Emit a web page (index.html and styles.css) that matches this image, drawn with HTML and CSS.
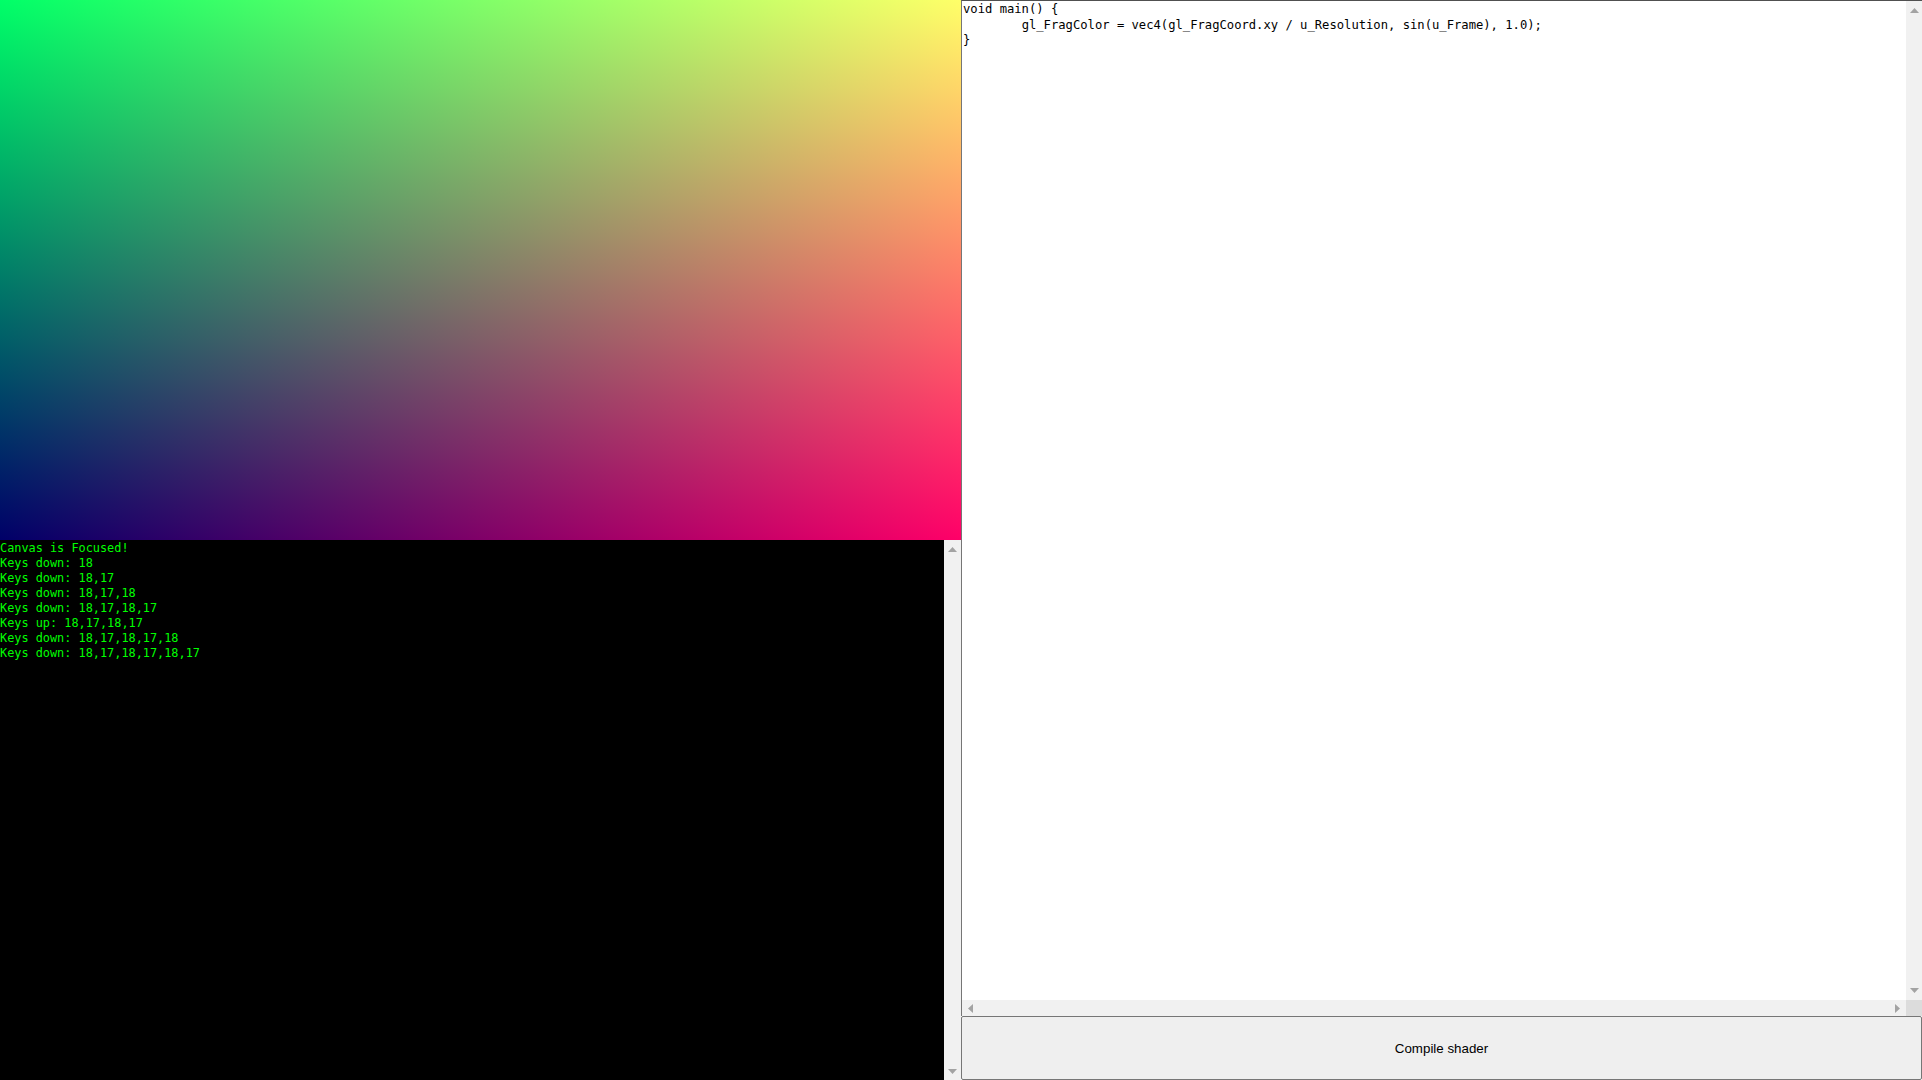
FILE: index.html
```html
<!DOCTYPE html>
<html lang="en">
<head>
<meta charset="utf-8">
<title>Shader editor</title>
<link rel="stylesheet" href="styles.css">
</head>
<body>
<div class="app">
  <div class="left">
    <div class="canvas"></div>
    <div class="console">
      <div class="log">Canvas is Focused!
Keys down: 18
Keys down: 18,17
Keys down: 18,17,18
Keys down: 18,17,18,17
Keys up: 18,17,18,17
Keys down: 18,17,18,17,18
Keys down: 18,17,18,17,18,17</div>
      <div class="vbar vbar-console">
        <svg class="arr" width="9" height="5" viewBox="0 0 9 5"><polygon points="4.5,0 9,5 0,5" fill="#a3a3a3"/></svg>
        <svg class="arr" width="9" height="5" viewBox="0 0 9 5"><polygon points="0,0 9,0 4.5,5" fill="#a3a3a3"/></svg>
      </div>
    </div>
  </div>
  <div class="right">
    <div class="editor">
      <textarea class="code" spellcheck="false">void main() {
	gl_FragColor = vec4(gl_FragCoord.xy / u_Resolution, sin(u_Frame), 1.0);
}</textarea>
      <div class="vbar vbar-editor">
        <svg class="arr" width="9" height="5" viewBox="0 0 9 5"><polygon points="4.5,0 9,5 0,5" fill="#a3a3a3"/></svg>
        <svg class="arr" width="9" height="5" viewBox="0 0 9 5"><polygon points="0,0 9,0 4.5,5" fill="#a3a3a3"/></svg>
      </div>
      <div class="hbar">
        <svg class="arr" width="5" height="9" viewBox="0 0 5 9"><polygon points="0,4.5 5,0 5,9" fill="#a3a3a3"/></svg>
        <svg class="arr" width="5" height="9" viewBox="0 0 5 9"><polygon points="0,0 5,4.5 0,9" fill="#a3a3a3"/></svg>
      </div>
      <div class="corner"></div>
    </div>
    <button class="compile" type="button">Compile shader</button>
  </div>
</div>
</body>
</html>
```

FILE: styles.css
```css
html, body {
  margin: 0;
  padding: 0;
  width: 1922px;
  height: 1080px;
  overflow: hidden;
  background: #ffffff;
}

.app {
  display: grid;
  grid-template-columns: 961px 961px;
  height: 1080px;
}

.left {
  display: grid;
  grid-template-rows: 540px 540px;
}

.canvas {
  background-color: rgb(0, 0, 104);
  background-image:
    linear-gradient(to right, #000000, #ff0000),
    linear-gradient(to top, #000000, #00ff00);
  background-blend-mode: screen;
}

.console {
  display: grid;
  grid-template-columns: 944px 17px;
  background: #000000;
  min-height: 0;
}

.log {
  white-space: pre;
  color: #00ff00;
  font-family: "DejaVu Sans Mono", "Liberation Mono", monospace;
  font-size: 11.87px;
  line-height: 15px;
  padding-top: 1px;
  overflow: hidden;
}

.vbar {
  background: #f1f1f1;
  display: flex;
  flex-direction: column;
  justify-content: space-between;
  align-items: center;
}

.vbar-console {
  padding: 7px 0 6px;
}

.vbar-editor {
  padding: 7px 0 7px;
}

.arr {
  display: block;
}

.right {
  display: grid;
  grid-template-rows: 1016px 64px;
}

.editor {
  display: grid;
  grid-template-columns: 944px 16px;
  grid-template-rows: 999px 16px;
  border-left: 1px solid #767676;
  border-top: 1px solid #505050;
  min-height: 0;
}

.code {
  margin: 0;
  border: none;
  outline: none;
  resize: none;
  overflow: hidden;
  padding: 1px 0 0 1px;
  background: #ffffff;
  color: #000000;
  font-family: "DejaVu Sans Mono", "Liberation Mono", monospace;
  font-size: 12.18px;
  line-height: 15.5px;
  tab-size: 8;
  white-space: pre;
}

.hbar {
  background: #f1f1f1;
  display: flex;
  justify-content: space-between;
  align-items: center;
  padding: 0 6px;
}

.corner {
  background: #dcdcdc;
}

.compile {
  margin: 0;
  border: 1px solid #767676;
  border-radius: 2px;
  background: #efefef;
  color: #000000;
  font-family: "Liberation Sans", Arial, sans-serif;
  font-size: 13.33px;
  padding: 0;
}
```
